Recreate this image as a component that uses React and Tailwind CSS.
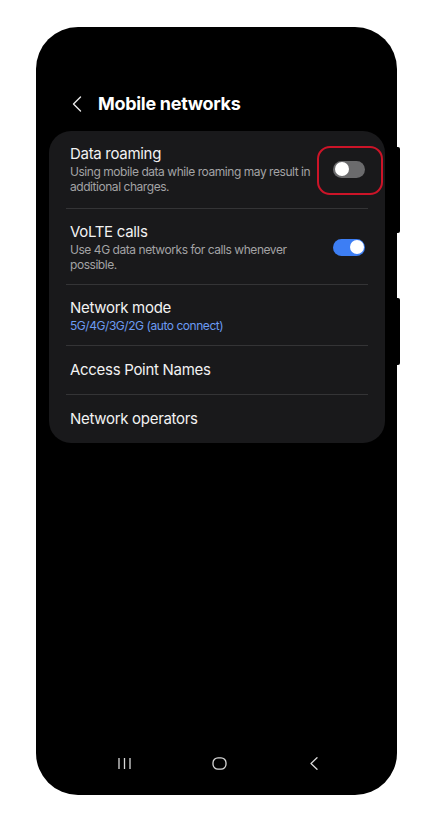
import React from 'react';

const font = { fontFamily: 'Inter, "Noto Sans", sans-serif' };

const Toggle = ({ on }) => (
    <div
        className={`relative w-[32px] h-[17px] rounded-full flex items-center px-[1.5px] ${on ? 'bg-[#3d7ef4] justify-end' : 'bg-[#6b6b6d] justify-start'}`}
    >
        <div className="w-[14px] h-[14px] rounded-full bg-white" />
    </div>
);

const Row = ({ title, sub, subBlue, toggle, highlight, last, py = 'pt-[13px] pb-[13px]' }) => (
    <div className="px-[17px]">
        <div className={`flex items-center ${py} ${last ? '' : 'border-b border-[#343436]'}`}>
            <div className="flex-1 pl-[4px] pr-[18px]">
                <div className="text-[15px] leading-[20px] text-[#f2f2f2] tracking-[-0.3px]">{title}</div>
                {sub && (
                    <div className={`text-[12px] leading-[15px] tracking-[-0.45px] ${subBlue ? 'text-[#6b9bf2]' : 'text-[#a3a3a5]'}`}>
                        {sub}
                    </div>
                )}
            </div>
            {toggle !== undefined && (
                <div className="relative mr-[3px]">
                    {highlight && (
                        <div className="absolute -left-[16px] -right-[18px] -top-[15px] -bottom-[17px] rounded-[13px] border-2 border-[#cc1428]" />
                    )}
                    <Toggle on={toggle} />
                </div>
            )}
        </div>
    </div>
);

export default function App() {
    return (
        <div className="w-[432px] h-[820px] bg-white relative" style={font}>
            <div className="absolute left-[36px] top-[27px]">
                {/* Side buttons */}
                <div className="absolute left-[359px] top-[120px] w-[5px] h-[86px] bg-black rounded-r-[2px]" />
                <div className="absolute left-[359px] top-[271px] w-[5px] h-[67px] bg-black rounded-r-[2px]" />

                {/* Phone body */}
                <div className="relative w-[361px] h-[768px] bg-black rounded-[42px] flex flex-col">
                    {/* Header */}
                    <div className="flex items-center pt-[64px] pl-[36px] h-[89px]">
                        <svg width="10" height="16" viewBox="0 0 10 16" fill="none">
                            <path d="M8.5 1L1.5 8L8.5 15" stroke="#e8e8e8" strokeWidth="1.4" strokeLinecap="round" strokeLinejoin="round" />
                        </svg>
                        <span className="ml-[16px] text-[18px] leading-[24px] font-bold text-white tracking-[-0.3px]">
                            Mobile networks
                        </span>
                    </div>

                    {/* Card */}
                    <div className="mt-[15px] mx-[13px] mr-[12px] bg-[#19191b] rounded-[22px] flex flex-col">
                        <Row
                            title="Data roaming"
                            sub="Using mobile data while roaming may result in additional charges."
                            toggle={false}
                            highlight
                            py="pt-[13px] pb-[14px]"
                        />
                        <Row
                            title="VoLTE calls"
                            sub="Use 4G data networks for calls whenever possible."
                            toggle={true}
                            py="pt-[13px] pb-[12px]"
                        />
                        <Row
                            title="Network mode"
                            sub="5G/4G/3G/2G (auto connect)"
                            subBlue
                            py="pt-[13px] pb-[12px]"
                        />
                        <Row title="Access Point Names" py="pt-[14px] pb-[14px]" />
                        <Row title="Network operators" last py="pt-[14px] pb-[14px]" />
                    </div>

                    <div className="flex-1" />

                    {/* Navigation bar */}
                    <div className="flex items-center justify-center gap-[80px] pl-[6px] pb-[25px]">
                        <svg width="15" height="13" viewBox="0 0 15 13" fill="none">
                            <path d="M2 1V12M7.5 1V12M13 1V12" stroke="#d8d8d8" strokeWidth="1.3" />
                        </svg>
                        <svg width="15" height="13" viewBox="0 0 15 13" fill="none">
                            <rect x="1" y="0.8" width="13" height="11.4" rx="5" stroke="#d8d8d8" strokeWidth="1.3" />
                        </svg>
                        <svg width="15" height="13" viewBox="0 0 15 13" fill="none">
                            <path d="M10 0.8L4 6.5L10 12.2" stroke="#d8d8d8" strokeWidth="1.3" strokeLinecap="round" strokeLinejoin="round" />
                        </svg>
                    </div>
                </div>
            </div>
        </div>
    );
}
